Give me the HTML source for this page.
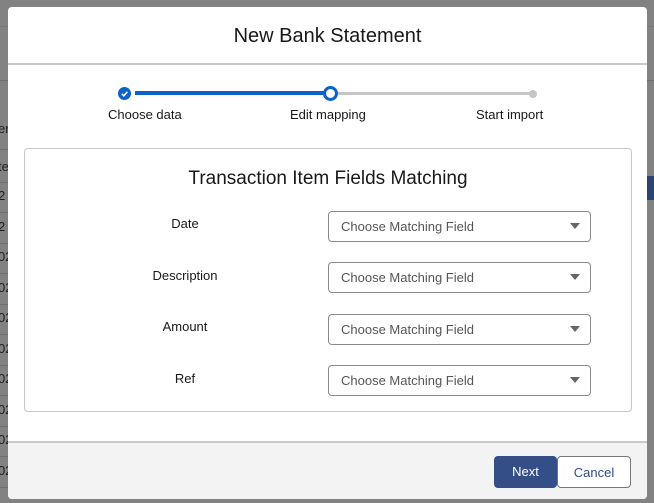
<!DOCTYPE html>
<html><head><style>
*{box-sizing:border-box;margin:0;padding:0}
body{width:654px;height:503px;overflow:hidden;background:#828282;font-family:"Liberation Sans",Arial,sans-serif;position:relative}
.bgl{position:absolute;left:0;width:8px;height:1px;background:#6e6e6e}
.bgt{position:absolute;left:-2px;font-size:13px;color:#1e1e1e}
.modal{position:absolute;left:8px;top:7px;width:639px;height:492px;background:#fff;border-radius:4px;overflow:hidden}
.hdr{height:58px;border-bottom:2px solid #c9c9c9;text-align:center;font-size:20px;line-height:58px;color:#181818}
.ftr{position:absolute;left:0;right:0;bottom:0;height:58px;background:#f3f3f3;border-top:2px solid #c9c9c9}
.btn{position:absolute;top:13px;height:32px;border-radius:4px;font-size:13px;line-height:31px;text-align:center}
.card{position:absolute;left:16px;top:141px;width:608px;height:264px;border:1px solid #c9c9c9;border-radius:4px}
.lbl{position:absolute;font-size:13px;color:#181818;text-align:center;width:120px}
.sel{position:absolute;left:303px;width:263px;height:31px;border:1px solid #8a8a8a;border-radius:4px;font-size:13px;color:#555;line-height:29px;padding-left:12px}
.sel:after{content:"";position:absolute;right:10px;top:11px;border-left:5.5px solid transparent;border-right:5.5px solid transparent;border-top:6px solid #666}
.stl{position:absolute;font-size:13px;color:#181818}
</style></head><body>
<div class="bgl" style="top:26px;width:654px;background:#777"></div>
<div class="bgl" style="top:80px;width:654px"></div>
<div class="bgl" style="top:149px"></div>
<div class="bgl" style="top:182px"></div>
<div class="bgl" style="top:212px"></div>
<div class="bgl" style="top:243px"></div>
<div class="bgl" style="top:273px"></div>
<div class="bgl" style="top:304px"></div>
<div class="bgl" style="top:334px"></div>
<div class="bgl" style="top:365px"></div>
<div class="bgl" style="top:395px"></div>
<div class="bgl" style="top:426px"></div>
<div class="bgl" style="top:456px"></div>
<div class="bgl" style="top:487px"></div>
<div class="bgt" style="top:121px">er</div>
<div class="bgt" style="top:159px">te</div>
<div class="bgt" style="top:188px">2</div>
<div class="bgt" style="top:219px">2</div>
<div class="bgt" style="top:249px">02</div>
<div class="bgt" style="top:280px">02</div>
<div class="bgt" style="top:310px">02</div>
<div class="bgt" style="top:341px">02</div>
<div class="bgt" style="top:371px">02</div>
<div class="bgt" style="top:402px">02</div>
<div class="bgt" style="top:432px">02</div>
<div class="bgt" style="top:463px">02</div>
<div style="position:absolute;left:647px;top:176px;width:7px;height:24px;background:#2d4470"></div>
<div class="modal">
 <div class="hdr">New Bank Statement</div>
 <div style="position:absolute;left:127px;top:84px;width:195px;height:4px;background:#0a63c9"></div>
 <div style="position:absolute;left:322px;top:85px;width:203px;height:3px;background:#c6c6c6"></div>
 <div style="position:absolute;left:110px;top:80px;width:13px;height:13px;border-radius:50%;background:#0a63c9"></div>
 <svg style="position:absolute;left:110px;top:80px" width="13" height="13"><path d="M3.8 6.8l2 2 3.6-4" stroke="#fff" stroke-width="1.6" fill="none"/></svg>
 <div style="position:absolute;left:315px;top:79px;width:15px;height:15px;border-radius:50%;border:3.5px solid #0a63c9;background:#fff"></div>
 <div style="position:absolute;left:521px;top:83px;width:8px;height:8px;border-radius:50%;background:#c6c6c6"></div>
 <div class="stl" style="left:100px;top:100px">Choose data</div>
 <div class="stl" style="left:282px;top:100px">Edit mapping</div>
 <div class="stl" style="left:468px;top:100px">Start import</div>
 <div class="card">
  <div style="position:absolute;left:0;right:0;top:19px;text-align:center;font-size:19px;color:#181818">Transaction Item Fields Matching</div>
  <div class="lbl" style="left:100px;top:67px">Date</div>
  <div class="lbl" style="left:100px;top:119px">Description</div>
  <div class="lbl" style="left:100px;top:170px">Amount</div>
  <div class="lbl" style="left:100px;top:222px">Ref</div>
  <div class="sel" style="top:62px">Choose Matching Field</div>
  <div class="sel" style="top:113px">Choose Matching Field</div>
  <div class="sel" style="top:165px">Choose Matching Field</div>
  <div class="sel" style="top:216px">Choose Matching Field</div>
 </div>
 <div class="ftr">
  <div class="btn" style="left:486px;width:63px;background:#344e87;color:#fff">Next</div>
  <div class="btn" style="left:549px;width:74px;background:#fff;border:1px solid #777;color:#2d4d8a">Cancel</div>
 </div>
</div>
</body></html>
